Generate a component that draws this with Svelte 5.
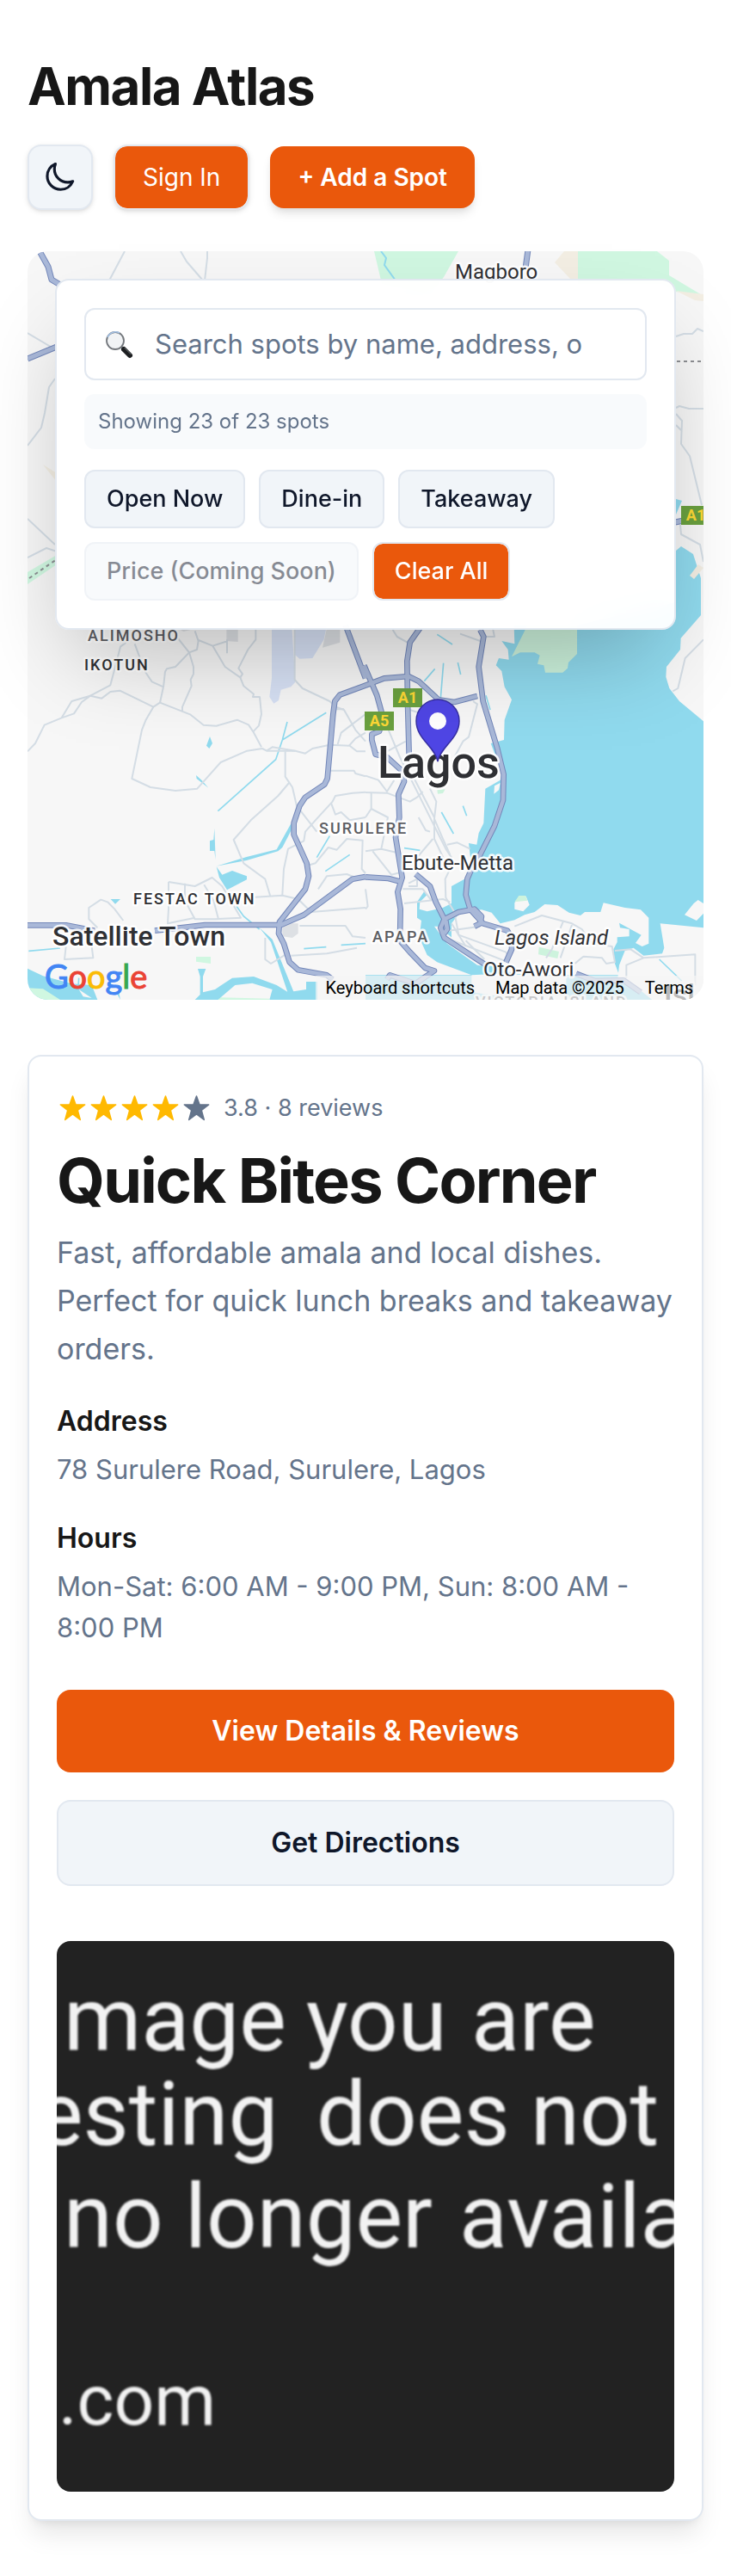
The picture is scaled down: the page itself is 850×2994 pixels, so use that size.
<script>
  const filters = ['Open Now', 'Dine-in', 'Takeaway'];
  const stars = [true, true, true, true, false];
  const details = [
    { label: 'Address', value: '78 Surulere Road, Surulere, Lagos' },
    { label: 'Hours', value: 'Mon-Sat: 6:00 AM - 9:00 PM, Sun: 8:00 AM - 8:00 PM' }
  ];
  let query = $state('');

  // Road geometry west of x=425, in third-pixel units from (0, 720)
  const westRoads = [
    'M96 460L123 432L155 368L215 343L258 328L285 288L315 266L385 229L402 165L420 95L440 80',
    'M215 343L250 285L315 266L355 275L385 252L418 248L535 305',
    'M470 85L505 180L530 217L570 235',
    'M620 65L660 115L675 165V190L665 210L668 232L636 305V318',
    'M680 40L692 75L687 105L660 115L612 165L582 172L576 182L570 235L558 290L535 305L508 352L495 385L460 555L525 585L612 597L688 590L770 498L862 458L915 450L930 458H1030L1065 467L1090 450L1150 437L1220 440L1245 460H1275',
    'M558 290L665 332L710 368L755 371L827 350L867 367L883 391L912 445',
    'M692 72L742 92L795 75M792 70V118M742 92L785 165L838 202L850 232L885 260L882 270H906L912 330L903 370L883 391',
    'M892 36V70L865 105L832 170L846 190L838 202',
    'M1028 36V210L1055 240L1150 285L1172 305L1200 315L1240 385L1275 425',
    'M930 458L950 445L1030 458M995 460V548L1020 585L1035 650L1105 740M1008 570L970 615L875 700L815 768L850 850L925 905L943 965',
    'M1165 313H1200M1178 435L1190 395L1275 330M1218 440L1240 415L1275 395M1150 527H1235L1240 537L1275 547',
    'M985 960L990 870L1005 800L1060 772L1065 740L1105 695L1160 635L1170 615L1230 605L1275 602',
    'M1155 640L1170 680L1190 672L1220 700L1275 690',
    'M1075 857L1100 850L1145 795L1175 803L1210 765L1265 770L1262 870L1275 885',
    'M588 915L680 930L740 900L775 930L840 1040L750 1045H680L645 980V920M588 915V1010L585 1060L680 1040M712 925L745 980L762 1045',
    'M430 1050L400 1010L375 985L352 977L310 1005V1045L340 1075M320 1140L325 1180L225 1185L230 1140',
    'M890 968L985 962L1040 975L1085 1020L1275 1005M1045 1068H1205L1230 1105L1275 1110M1015 1172L1140 1165L1245 1145',
    'M1110 940L1140 895L1210 888L1240 900M925 1110V1185L945 1200L1010 1160'
  ];
  // East of x=425, third-pixel units from (425, 720)
  const eastRoads = [
    'M95 36L110 60L150 82M330 50L400 75M420 60H450L445 36',
    'M155 315L200 330M375 285L390 295L360 410L340 425L310 480',
    'M80 385L120 480L160 560L280 800L300 830L290 880L278 905L280 970L310 1020L325 1100L490 1160L500 1180',
    'M170 555L240 690L240 765L290 870',
    'M225 590L247 635L240 695L270 765L295 820M285 785L320 778L365 800',
    'M0 545L45 560L75 600L100 560M0 603L75 605L155 635L180 620L200 600',
    'M20 605V660L78 690L55 800L0 808M20 660L0 690M55 800L120 815L135 870M25 808L90 890L130 880',
    'M75 460L140 425M235 765L180 830M185 690L210 735L225 740',
    'M135 990L270 975L295 985M130 940L200 940L230 980M150 920L180 905L180 930L150 930',
    'M0 940L8 1000L0 1010M290 1085L400 1070M280 1110L485 1190M520 1070L615 1032L720 1060L755 1080L790 1130L860 1140L870 1195L840 1200L825 1180L760 1175L730 1200',
    'M690 1052L650 1150L630 1180M720 1065L680 1180M870 1155L925 1150L970 1180L1150 1168V1275M970 1180L910 1205V1250',
    'M1179 70L1115 135L1090 240L1072 250M350 1120L415 1185M300 1060L350 1140'
  ];
  const westHighways = [
    'M1205 20L1275 205M1275 230L1185 263L1168 285L1162 330L1142 555L1132 575L1065 620L1045 650L1025 710V750L1070 850L1077 895L1065 940L975 1055L972 1095L990 1130L1010 1195L1040 1222L1140 1240L1160 1255',
    'M96 1066H230L330 1085M540 1085L630 1075L715 1065H980L1060 1030L1230 905L1275 897'
  ];
  const eastHighways = [
    'M190 30L155 80L145 145L147 290L152 470',
    'M-5 160L40 265L62 345L48 390L22 400V420L35 470L75 480L130 530L135 565L115 610L118 690L105 760L128 900L112 950L122 1010L120 1120L155 1160L208 1215L240 1225L210 1245L175 1270L85 1240L75 1255',
    'M0 230L65 205L150 198L185 215L255 280L310 288L390 267',
    'M400 36L412 60L395 165L410 285L460 450L482 540L480 630L450 720L400 820L370 870L355 905L350 960L365 1010L410 1060L495 1085L510 1110V1150L490 1195',
    'M0 898L80 903L125 915M175 888L225 930L245 985L275 1045L262 1075L275 1110L420 1205',
    'M275 1045L325 1020L380 1010L405 1035L400 1060L380 1070M280 1050L285 1080L275 1095M735 1235L800 1260L900 1258L960 1300'
  ];
</script>

<main class="page">
  <header class="masthead">
    <h1>Amala Atlas</h1>
    <div class="actions">
      <button class="theme" type="button" aria-label="Toggle dark mode">
        <svg viewBox="0.5 0 24 24" width="38" height="38" aria-hidden="true">
          <path d="M21.752 15.002A9.72 9.72 0 0 1 18 15.75 9.75 9.75 0 0 1 8.25 6c0-1.33.266-2.597.748-3.752A9.753 9.753 0 0 0 3 11.25 9.753 9.753 0 0 0 12.75 21a9.753 9.753 0 0 0 9.002-5.998Z" />
        </svg>
      </button>
      <button class="signin" type="button">Sign In</button>
      <button class="add" type="button">+ Add a Spot</button>
    </div>
  </header>

  <section class="map" aria-label="Map">
    <svg class="tiles" viewBox="32 292 786 870" preserveAspectRatio="xMidYMid slice" aria-hidden="true">
      <rect x="0" y="200" width="900" height="1000" fill="#f7f7f7" />
      <!-- parks and sand -->
      <path fill="#d0f7e1" d="M435 292H533L516 322L500 342L444 330ZM672 292H764L778 303V320L818 344L786 339L770 330H672ZM32 665L66 645V656L32 679Z" />
      <path fill="#f3eee3" d="M656 292H672V324H663L645 305ZM786 338L818 342V350L808 349ZM50 540L66 550V560Z" />
      <path fill="none" stroke="#90daee" stroke-width="2" d="M443 292L449 300L447 308L460 326" />
      <g transform="translate(0 720) scale(.33333)">
        <path fill="#d7e1f5" d="M948 20H1018L1030 218L1015 235L980 245L972 282L955 293L940 270L948 205ZM1028 20H1140L1130 70L1090 135L1045 137L1028 122Z" />
        <path fill="#dde0e4" d="M790 20H830V78L790 75ZM1140 30H1186V80L1125 98ZM985 1060H1040V1095L1020 1110L985 1105ZM620 30H690L640 42Z" />
        <path fill="#90daee" d="M732 408L741 432L730 450L720 440ZM684 543L705 562L727 587L686 555ZM748 728L752 838L748 807H732V772L745 768ZM755 862L775 890L810 876L861 895V907L792 943L765 900ZM386 975H420L402 992ZM96 1217L150 1243L250 1270L320 1275L340 1326H96ZM690 1218H718L708 1245V1300L750 1290L810 1250L885 1245L965 1275L1005 1300L1068 1290V1263H1107V1326H680L698 1308V1245ZM905 1075L950 1115L1025 1300L1005 1305L945 1125ZM405 1300H415L420 1326Z" />
        <path fill="none" stroke="#90daee" stroke-width="5" d="M760 668L962 488L985 420L1002 357M985 420L1138 325M1105 830L1150 755M1135 878L1220 820M825 1000L850 1035L905 1080M270 1326L275 1250M100 1156L210 1146M1060 1148L1138 1142M1190 1135L1275 1130" />
        <path fill="#90daee" d="M755 860L860 828L965 802L1015 712L1025 718L985 795L970 808L860 840Z" />
        <path fill="#f7f7f7" d="M770 1318L820 1275L880 1268L950 1290L940 1326H770ZM275 1290L320 1320L290 1315Z" />
        <path fill="#d0f7e1" d="M96 1285L150 1288L210 1326H96ZM770 1318L940 1322V1326H760ZM684 1176H735V1200L684 1193Z" />
      </g>
      <g transform="translate(425 720) scale(.33333)">
        <path fill="#90daee" d="M518 20L520 85L475 75L497 105L500 140L465 135L455 160L475 180L485 235L510 280L485 350L483 420L437 432L455 480L480 520L470 560L418 590L412 710L395 745L388 785L360 780L372 880L355 900L300 930V990L270 1005L215 1018L188 1010L190 985L215 960L205 948L180 985V1040L195 1050L188 1110L215 1170L250 1195L370 1240H0V1326H1000L905 1250H880L885 1205L905 1155L935 1145L970 1172L1035 1165L1042 1145L1028 1060L1179 1075V355L1095 285L1060 240L1048 200L1050 165L1098 105L1100 65L1170 -15V-144L1143 -228L1101 -255L1083 -240V-60L738 20Z" />
        <path fill="#90daee" d="M1083 -420L1104 -414L1083 -366Z" />
        <path fill="#cdf3dd" d="M510 130L565 20H738V120L708 150L705 170L688 185H627L622 160L600 155L608 125L590 115H540Z" />
        <!-- islands -->
        <path fill="#f7f7f7" d="M300 1060L330 1020L405 1012L440 1022L470 1060L520 1048L555 1030L590 1020L625 993L670 996L710 1022L750 1032L765 1020H820L830 988L905 1005L960 1012L988 1040V1130L965 1140L942 1128L962 1100L885 1058L888 1075L920 1080V1105L878 1108V1125L865 1150L870 1200L885 1240H620L520 1235L415 1200L300 1120Z" />
        <path fill="#f7f7f7" d="M520 988L540 965L560 965L572 995L550 1018L520 1010ZM1160 978L1179 990V1025L1155 1050L1113 1030L1145 990ZM450 580L470 570L465 595L448 608ZM240 1070H255L390 1185L420 1210L390 1205L285 1130ZM370 1240L470 1235L700 1245V1326H560L370 1300Z" />
        <path fill="#cdf3dd" d="M520 985L535 963H558L565 980ZM605 1142L675 1158L670 1182L603 1168ZM250 595L278 592L270 606L252 608Z" />
        <path fill="none" stroke="#90daee" stroke-width="5" d="M250 52L303 87M205 215L242 172M262 275L272 152M322 150L332 192M420 265L435 315M265 672L307 747M340 650L353 685M135 797L190 805M1025 1185L1103 1260" />
      </g>
      <!-- secondary roads -->
      <g fill="none" stroke="#d4dde5" stroke-width="6" stroke-linejoin="round">
        <g transform="translate(0 720) scale(.33333)">{#each westRoads as d}<path {d} />{/each}</g>
        <g transform="translate(425 720) scale(.33333)">{#each eastRoads as d}<path {d} />{/each}</g>
        <path stroke-width="2" d="M145 292L127 326M210 292L217 304L236 326M241 292V300L238 326M32 387L64 406M64 440L57 450L52 480L48 497L32 518M32 603L64 633M32 648L54 637L66 641M786 391L795 388H805L811 382L818 385M786 474L790 472L801 475H818M786 481L793 489L792 516L802 530L816 587M786 494L792 500M791 610L792 621L814 633L818 653" />
      </g>
      <!-- highways: casing, then fill -->
      {#each [{ stroke: '#7387b9', wide: 20, thin: 7 }, { stroke: '#a9b8d8', wide: 14, thin: 5 }] as layer}
        <g fill="none" stroke={layer.stroke} stroke-width={layer.wide} stroke-linejoin="round">
          <g transform="translate(0 720) scale(.33333)">{#each westHighways as d}<path {d} />{/each}</g>
          <g transform="translate(425 720) scale(.33333)">{#each eastHighways as d}<path {d} />{/each}</g>
          <path stroke-width={layer.thin} d="M46 292L56 310L60 325L70 331M614 290L611 312M32 417L66 403M785 607L800 604L818 598" />
        </g>
      {/each}
      <path fill="#f3eee3" d="M802 669L812 656L818 660L807 673Z" />
      <path fill="none" stroke="#8d8f93" stroke-width="2" stroke-dasharray="4 4" d="M787 420H816M34 672L66 650" />
      <!-- place names -->
      <g class="names">
        <text x="529" y="324" font-size="24">Magboro</text>
        <g class="district">
          <text class="soft" x="102" y="745">ALIMOSHO</text>
          <text x="98" y="779">IKOTUN</text>
          <text class="soft" x="371" y="969">SURULERE</text>
          <text x="155" y="1051">FESTAC TOWN</text>
          <text class="soft" x="433" y="1095">APAPA</text>
          <text class="soft" x="553" y="1171">VICTORIA ISLAND</text>
        </g>
        <text x="467" y="1011" font-size="24">Ebute-Metta</text>
        <text x="575" y="1098" font-size="24" font-style="italic">Lagos Island</text>
        <text x="562" y="1135" font-size="24">Oto-Awori</text>
        <text x="61" y="1099" font-size="32" font-weight="500">Satellite Town</text>
        <text x="772" y="1168" font-size="34" font-weight="500">Isl</text>
        <text x="439" y="904" font-size="52" font-weight="500">Lagos</text>
      </g>
      <g class="shield">
        <rect x="457" y="800" width="34" height="22" /><text x="474" y="817">A1</text>
        <rect x="424" y="827" width="34" height="22" /><text x="441" y="844">A5</text>
        <rect x="792" y="588" width="34" height="22" /><text x="809" y="605">A1</text>
      </g>
      <path fill="#4f46e5" stroke="#3730a3" stroke-width="1.5" d="M509 885C506 868 484 859 484 838A25 25 0 0 1 534 838C534 859 512 868 509 885Z" />
      <circle cx="509" cy="838" r="10" fill="#fff" />
    </svg>

    <form class="panel" onsubmit={(e) => e.preventDefault()}>
      <div class="search">
        <svg class="glass" viewBox="0 0 36 36" width="36" height="36" aria-hidden="true">
          <path d="M21 21L24 24" stroke="#8a8f96" stroke-width="2.5" />
          <path d="M24 24L31 31" stroke="#1d1f21" stroke-width="6" stroke-linecap="round" />
          <path d="M25 22.500L32 29.500" stroke="#74797d" stroke-width="1" stroke-linecap="round" />
          <circle cx="14" cy="14" r="10" fill="#f1f3f5" stroke="#73777c" stroke-width="1.800" />
          <path d="M5 10A10 10 0 0 1 19 5" fill="none" stroke="#a4c3e8" stroke-width="1.500" />
        </svg>
        <input type="text" aria-label="Search spots" placeholder="Search spots by name, address, o" bind:value={query} />
      </div>
      <p class="count">Showing 23 of 23 spots</p>
      <div class="filters">
        {#each filters as name}
          <button class="chip" type="button">{name}</button>
        {/each}
        <button class="chip" type="button" disabled>Price (Coming Soon)</button>
        <button class="chip clear" type="button">Clear All</button>
      </div>
    </form>

    <div class="credits">
      <span class="google" aria-label="Google"><b>G</b><b>o</b><b>o</b><b>g</b><b>l</b><b>e</b></span>
      <div class="legal">
        <button type="button">Keyboard shortcuts</button>
        <span>Map data ©2025</span>
        <a href="#terms">Terms</a>
      </div>
    </div>
  </section>

  <article class="card">
    <div class="summary">
      <div class="rating">
        <div class="stars">
          {#each stars as on}
            <svg class:off={!on} viewBox="0 0 36 36" width="36" height="36" aria-hidden="true">
              <path d="M18.500 4L22.100 14H32.700L24.300 20.500L27.300 31.500L18.500 25L9.700 31.500L12.700 20.500L4.300 14H14.900Z" />
            </svg>
          {/each}
        </div>
        <span>3.8 · 8 reviews</span>
      </div>
      <h2>Quick Bites Corner</h2>
      <p class="blurb">Fast, affordable amala and local dishes. Perfect for quick lunch breaks and takeaway orders.</p>
    </div>
    <dl>
      {#each details as item}
        <div>
          <dt>{item.label}</dt>
          <dd>{item.value}</dd>
        </div>
      {/each}
    </dl>
    <div class="links">
      <a class="primary" href="#details">View Details &amp; Reviews</a>
      <a class="secondary" href="#directions">Get Directions</a>
    </div>
    <svg class="photo" viewBox="0 0 718 640" preserveAspectRatio="xMidYMid slice">
      <rect width="718" height="640" fill="#222" />
      <g class="notice">
        <text y="127"><tspan x="8">mage</tspan><tspan x="290">you</tspan><tspan x="482">are</tspan></text>
        <text y="237"><tspan x="-24">esting</tspan><tspan x="302">does</tspan><tspan x="551">not</tspan></text>
        <text y="356"><tspan x="8">no</tspan><tspan x="149">longer</tspan><tspan x="468">availa</tspan></text>
        <text class="small" x="2" y="562">.com</text>
      </g>
    </svg>
  </article>
</main>

<style>
  :global(body) {
    background: #fff;
  }
  .page {
    box-sizing: border-box;
    padding: 64px 32px;
    font-family: Inter, 'Liberation Sans', sans-serif;
    font-size: 32px;
    line-height: 48px;
    color: #171717;
  }
  .page * {
    box-sizing: border-box;
  }
  h1, h2, p, dl, dd {
    margin: 0;
  }
  button, input {
    font: inherit;
    color: inherit;
  }
  button {
    cursor: pointer;
  }
  a {
    color: inherit;
    text-decoration: none;
  }
  h1 {
    font-size: 60px;
    line-height: 72px;
    font-weight: 700;
    letter-spacing: -0.025em;
  }
  .masthead {
    display: flex;
    flex-direction: column;
    gap: 32px;
    margin-bottom: 48px;
  }
  .actions {
    display: flex;
    align-items: center;
    gap: 24px;
    font-size: 28px;
    line-height: 40px;
  }
  .theme, .signin {
    border: 2px solid #e2e8f0;
    box-shadow: 0 2px 6px rgba(0, 0, 0, 0.1), 0 2px 4px -2px rgba(0, 0, 0, 0.1);
  }
  .theme {
    display: grid;
    place-items: center;
    width: 76px;
    height: 76px;
    padding: 0;
    border-radius: 16px;
    background: #f1f5f9;
  }
  .theme path {
    fill: none;
    stroke: #0f172a;
    stroke-width: 2;
    stroke-linejoin: round;
  }
  .signin, .add {
    padding: 16px 32px;
    border-radius: 16px;
    background: #ea580c;
    color: #fff;
  }
  .signin {
    font-weight: 400;
    background-clip: padding-box;
  }
  .add {
    border: 0;
    font-weight: 600;
    box-shadow: 0 8px 12px -2px rgba(0, 0, 0, 0.1), 0 4px 8px -4px rgba(0, 0, 0, 0.1);
  }

  .map {
    position: relative;
    min-height: 870px;
    padding: 32px;
    margin-bottom: 64px;
  }
  .tiles {
    position: absolute;
    inset: 0;
    width: 100%;
    height: 100%;
    border-radius: 24px;
  }
  .names text {
    font-family: Roboto, sans-serif;
    fill: #2f3034;
    stroke: #fff;
    stroke-width: 5px;
    stroke-linejoin: round;
    stroke-opacity: 0.9;
    paint-order: stroke;
  }
  .district text {
    font-size: 18px;
    font-weight: 500;
    letter-spacing: 2px;
  }
  .district .soft {
    fill: #5c5d62;
  }
  .shield rect {
    fill: #6aa03f;
  }
  .shield text {
    font: 700 18px Roboto, sans-serif;
    fill: #fdd835;
    text-anchor: middle;
  }
  .panel {
    position: relative;
    padding: 32px;
    border: 2px solid #e2e8f0;
    border-radius: 16px;
    background: rgba(255, 255, 255, 0.95);
    backdrop-filter: blur(16px);
    box-shadow: 0 50px 100px -24px rgba(0, 0, 0, 0.25);
  }
  .search {
    display: flex;
    align-items: center;
    gap: 24px;
    height: 84px;
    padding: 0 20px;
    border: 2px solid #e2e8f0;
    border-radius: 12px;
    background: #fff;
  }
  .glass {
    flex: none;
    fill: none;
  }
  .search input {
    flex: 1;
    min-width: 0;
    padding: 0;
    border: 0;
    outline: 0;
    background: none;
    font-size: 31px;
    line-height: 48px;
  }
  .search input::placeholder {
    color: #64748b;
    opacity: 1;
  }
  .count {
    margin: 16px 0 24px;
    padding: 16px;
    border-radius: 12px;
    background: rgba(241, 245, 249, 0.5);
    font-size: 24px;
    line-height: 32px;
    color: #64748b;
  }
  .filters {
    display: flex;
    flex-wrap: wrap;
    gap: 16px;
  }
  .chip {
    padding: 12px 24px;
    border: 2px solid #e2e8f0;
    border-radius: 12px;
    background: #f1f5f9;
    font-size: 27px;
    line-height: 40px;
    font-weight: 500;
    color: #0f172a;
  }
  .chip:disabled {
    opacity: 0.5;
  }
  .clear {
    background: #ea580c;
    background-clip: padding-box;
    color: #fff;
  }
  .credits {
    position: absolute;
    right: 0;
    bottom: 0;
    left: 0;
    display: flex;
    align-items: flex-end;
    justify-content: space-between;
    padding-left: 20px;
    overflow: hidden;
    border-radius: 0 0 24px 24px;
  }
  .google {
    font: 38px/56px Lato, sans-serif;
    color: #4285f4;
    -webkit-text-stroke: 1px currentColor;
  }
  .google b {
    font-weight: 400;
  }
  .google b:nth-child(2), .google b:nth-child(6) {
    color: #ea4335;
  }
  .google b:nth-child(3) {
    color: #fbbc05;
  }
  .google b:nth-child(5) {
    color: #34a853;
  }
  .legal {
    display: flex;
    font: 20px/28px Roboto, sans-serif;
    color: #000;
  }
  .legal > * {
    padding: 0 12px;
    border: 0;
    background: rgba(245, 245, 245, 0.7);
    white-space: nowrap;
  }

  .card {
    display: flex;
    flex-direction: column;
    padding: 32px;
    border: 2px solid #e2e8f0;
    border-radius: 16px;
    background: #fff;
    box-shadow: 0 20px 30px -6px rgba(0, 0, 0, 0.1), 0 8px 12px -8px rgba(0, 0, 0, 0.1);
  }
  .summary {
    display: flex;
    flex-direction: column;
    gap: 16px;
    margin-bottom: 32px;
  }
  .rating {
    display: flex;
    align-items: center;
    gap: 14px;
    font-size: 27px;
    line-height: 56px;
    color: #64748b;
  }
  .stars {
    display: flex;
  }
  .stars path {
    fill: #ffb900;
    stroke: #ffb900;
    stroke-width: 1.5;
    stroke-linejoin: round;
  }
  .stars .off path {
    fill: #64748b;
    stroke: #64748b;
  }
  h2 {
    font-size: 72px;
    line-height: 80px;
    font-weight: 700;
    letter-spacing: -0.025em;
  }
  .blurb {
    font-size: 34px;
    line-height: 56px;
    color: #64748b;
  }
  dl {
    display: flex;
    flex-direction: column;
    gap: 32px;
    margin-bottom: 48px;
  }
  dt {
    margin-bottom: 8px;
    font-weight: 600;
  }
  dd {
    font-size: 31px;
    color: #64748b;
  }
  .links {
    display: flex;
    flex-direction: column;
    gap: 32px;
    margin-bottom: 64px;
    font-weight: 600;
    text-align: center;
  }
  .links a {
    padding: 24px 32px;
    border-radius: 16px;
  }
  .primary {
    background: #ea580c;
    color: #fff;
  }
  .secondary {
    border: 2px solid #e2e8f0;
    background: #f1f5f9;
    color: #0f172a;
  }
  .photo {
    display: block;
    width: 100%;
    height: 640px;
    border-radius: 16px;
  }
  .notice {
    filter: blur(1px);
  }
  .notice text {
    font-family: Roboto, sans-serif;
    font-size: 103px;
    fill: #f2f2f2;
  }
  .notice .small {
    font-size: 82px;
  }
</style>
